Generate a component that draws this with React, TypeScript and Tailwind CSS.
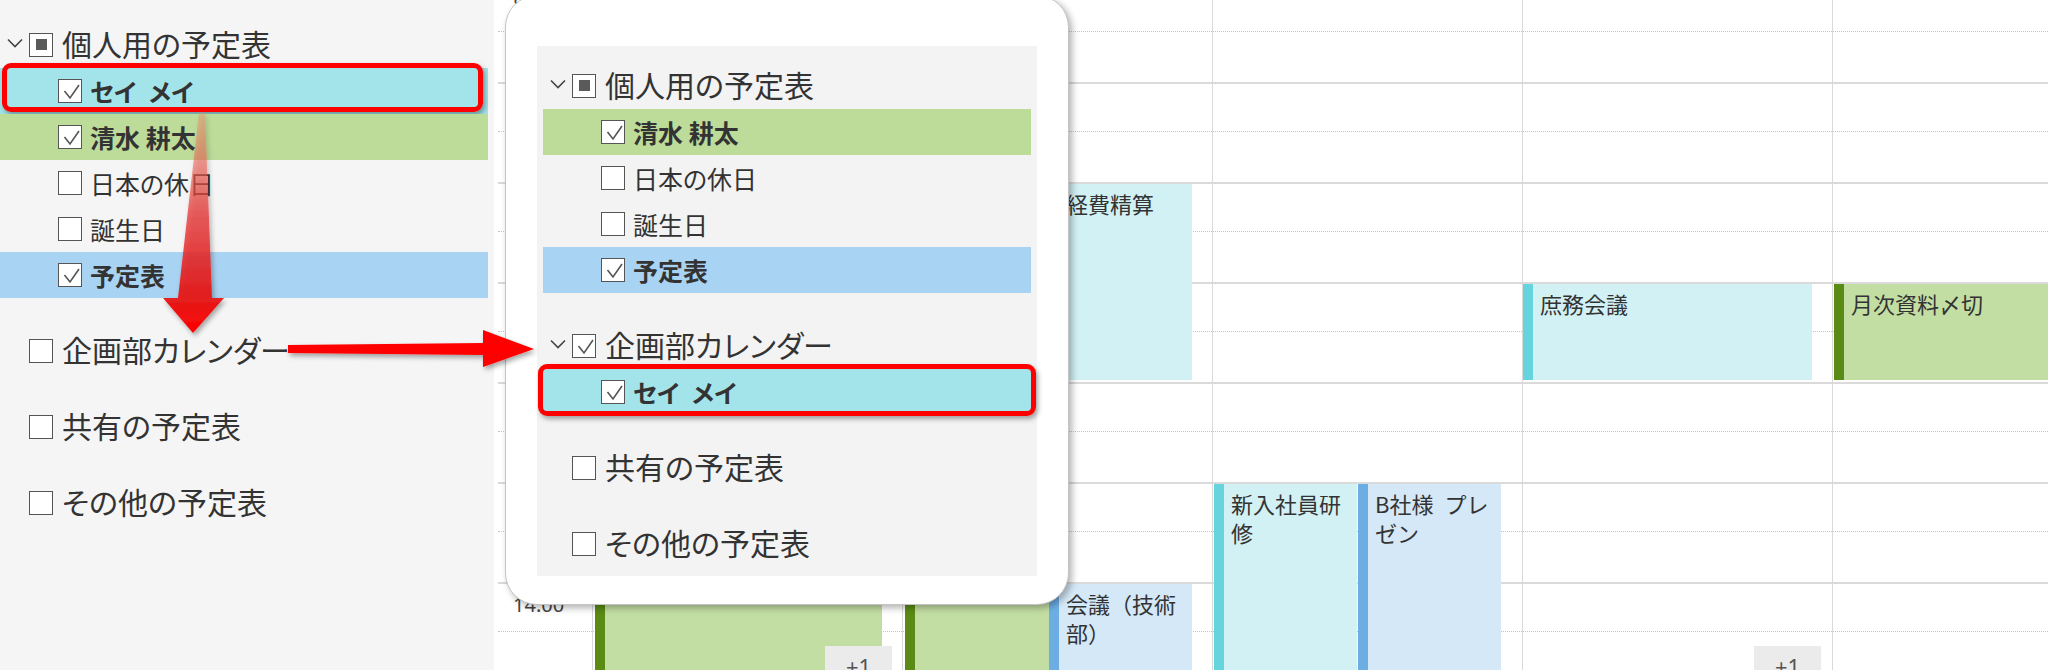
import React from 'react';

type State = 'off' | 'on' | 'mixed';
type Row = { label: string; checked?: boolean; bold?: boolean; bg?: string; mark?: boolean };
type Group = { label: string; state: State; open?: boolean; rows?: Row[] };

type CalEvent = {
  title: string;
  start: number;
  end: number;
  left: number;
  width: number;
  tone: string;
};

const HOURS = [8, 9, 10, 11, 12, 13, 14];

const sideGroups: Group[] = [
  {
    label: '個人用の予定表',
    state: 'mixed',
    open: true,
    rows: [
      { label: 'セイ\u2002メイ', checked: true, bold: true, bg: 'bg-[#a3e4ea]', mark: true },
      { label: '清水 耕太', checked: true, bold: true, bg: 'bg-[#bddb99]' },
      { label: '日本の休日' },
      { label: '誕生日' },
      { label: '予定表', checked: true, bold: true, bg: 'bg-[#a9d3f2]' },
    ],
  },
  { label: '企画部カレンダー', state: 'off' },
  { label: '共有の予定表', state: 'off' },
  { label: 'その他の予定表', state: 'off' },
];

const cardGroups: Group[] = [
  {
    label: '個人用の予定表',
    state: 'mixed',
    open: true,
    rows: [
      { label: '清水 耕太', checked: true, bold: true, bg: 'bg-[#bddb99]' },
      { label: '日本の休日' },
      { label: '誕生日' },
      { label: '予定表', checked: true, bold: true, bg: 'bg-[#a9d3f2]' },
    ],
  },
  {
    label: '企画部カレンダー',
    state: 'on',
    open: true,
    rows: [{ label: 'セイ\u2002メイ', checked: true, bold: true, bg: 'bg-[#a3e4ea]', mark: true }],
  },
  { label: '共有の予定表', state: 'off' },
  { label: 'その他の予定表', state: 'off' },
];

// tone -> background + left stripe
const tones: Record<string, string> = {
  cyan: 'bg-[#d2f1f4] border-[#66d4dc]',
  blue: 'bg-[#d4e8f7] border-[#6caee4]',
  green: 'bg-[#c3dea3] border-[#5a8b14]',
};

const days: { events: CalEvent[]; more?: number }[] = [
  {
    events: [{ title: '', start: 13, end: 15, left: 2, width: 287, tone: 'green' }],
    more: 232,
  },
  {
    events: [
      { title: '', start: 13, end: 15, left: 2, width: 144, tone: 'green' },
      { title: '経費精算', start: 10, end: 12, left: 146, width: 143, tone: 'cyan' },
      { title: '会議（技術部）', start: 14, end: 15, left: 146, width: 143, tone: 'blue' },
    ],
  },
  {
    events: [
      { title: '新入社員研修', start: 13, end: 15, left: 1, width: 143, tone: 'cyan' },
      { title: 'B社様\u2002プレゼン', start: 13, end: 15, left: 145, width: 143, tone: 'blue' },
    ],
  },
  {
    events: [{ title: '庶務会議', start: 11, end: 12, left: 0, width: 289, tone: 'cyan' }],
    more: 231,
  },
  {
    events: [{ title: '月次資料〆切', start: 11, end: 12, left: 1, width: 289, tone: 'green' }],
  },
];

function Checkbox({ state }: { state: State }) {
  return (
    <span className="relative flex h-[24px] w-[24px] shrink-0 items-center justify-center border-[1.5px] border-[#555] bg-white">
      {state === 'on' && (
        <svg className="absolute inset-0" width="24" height="24" viewBox="0 0 24 24">
          <polyline points="5.5,11 11,18 20,5" fill="none" stroke="#555" strokeWidth="1.6" />
        </svg>
      )}
      {state === 'mixed' && <span className="h-[11px] w-[11px] bg-[#5a5a5a]" />}
    </span>
  );
}

function Chevron() {
  return (
    <svg width="16" height="10" viewBox="0 0 16 10">
      <polyline points="1,1.5 8,8.5 15,1.5" fill="none" stroke="#444" strokeWidth="1.6" />
    </svg>
  );
}

function TreeList({ groups, markClass }: { groups: Group[]; markClass: string }) {
  return (
    <div className="flex w-[488px] flex-col gap-[26px] text-[#333] [font-feature-settings:'palt']">
      {groups.map((g) => (
        <div key={g.label}>
          <div className="flex h-[50px] items-center pl-[7px]">
            <span className="flex w-[16px] items-center">{g.open && <Chevron />}</span>
            <span className="ml-[6px] mt-[3px]">
              <Checkbox state={g.state} />
            </span>
            <span className="ml-[9px] text-[30px] leading-none">{g.label}</span>
          </div>
          {g.rows?.map((r) => (
            <div key={r.label} className={`relative flex h-[46px] items-center pl-[58px] ${r.bg ?? ''}`}>
              <Checkbox state={r.checked ? 'on' : 'off'} />
              <span className={`ml-[8px] text-[25px] leading-none ${r.bold ? 'font-bold' : ''}`}>{r.label}</span>
              {r.mark && (
                <span
                  className={`absolute rounded-[9px] border-[5px] border-[#ff0000] shadow-[2px_3px_5px_rgba(0,0,0,0.35)] ${markClass}`}
                />
              )}
            </div>
          ))}
        </div>
      ))}
    </div>
  );
}

function HourBlock({ label, inset }: { label?: string; inset?: boolean }) {
  return (
    <div className={`relative h-[100px] border-t-2 border-[#dadada] ${inset ? 'ml-[4px]' : ''}`}>
      <div className="h-[48px] border-b border-dotted border-[#c4c4c4]" />
      {label && (
        <span className="absolute left-[15px] top-[9px] font-['Noto_Sans',sans-serif] text-[20px] leading-[24px] text-[#444]">
          {label}
        </span>
      )}
    </div>
  );
}

function DayColumn({ events, more }: { events: CalEvent[]; more?: number }) {
  return (
    <div className="relative w-[310px] shrink-0 border-l border-[#d9d9d9]">
      {HOURS.map((h) => (
        <HourBlock key={h} />
      ))}
      {events.map((e, i) => (
        <div
          key={i}
          className={`absolute overflow-hidden border-l-[10px] pl-[7px] pt-[5px] text-[22px] leading-[29px] text-[#333] ${tones[e.tone]}`}
          style={{ top: (e.start - 8) * 100 + 2, height: (e.end - e.start) * 100 - 4, left: e.left, width: e.width }}
        >
          {e.title}
        </div>
      ))}
      {more !== undefined && (
        <div
          className="absolute top-[664px] flex h-[40px] w-[67px] justify-center bg-[#ebebeb] pt-[6px] font-['Noto_Sans',sans-serif] text-[22px] leading-[29px] text-[#555]"
          style={{ left: more }}
        >
          +1
        </div>
      )}
    </div>
  );
}

function Arrows() {
  return (
    <svg className="pointer-events-none absolute inset-0 z-30" width="2048" height="670" viewBox="0 0 2048 670">
      <defs>
        <linearGradient id="vfade" x1="0" y1="113" x2="0" y2="333" gradientUnits="userSpaceOnUse">
          <stop offset="0" stopColor="#f08a6a" stopOpacity="0.4" />
          <stop offset="0.45" stopColor="#e83a3a" stopOpacity="0.75" />
          <stop offset="0.85" stopColor="#e61414" stopOpacity="0.95" />
          <stop offset="1" stopColor="#f00" />
        </linearGradient>
        <filter id="shadow" x="-20%" y="-20%" width="140%" height="140%">
          <feDropShadow dx="2" dy="3" stdDeviation="2.5" floodColor="#000" floodOpacity="0.35" />
        </filter>
      </defs>
      <g filter="url(#shadow)">
        <polygon points="199,113 205,113 212,298 224,298 193,333 163,298 178,298" fill="url(#vfade)" />
        <polygon points="288,345 483,343 483,330 534,349 483,367 483,355 288,353" fill="#ff0000" />
      </g>
    </svg>
  );
}

export default function App() {
  return (
    <div className="relative flex h-[670px] w-[2048px] overflow-hidden bg-white font-['Noto_Sans_CJK_JP','Noto_Sans',sans-serif]">
      {/* left calendar list */}
      <aside className="w-[494px] shrink-0 bg-[#f5f5f5] pt-[18px]">
        <TreeList groups={sideGroups} markClass="-top-[5px] bottom-[2px] left-[2px] right-[5px]" />
      </aside>

      {/* week grid */}
      <main className="relative flex-1 overflow-hidden">
        <div className="mt-[-18px] flex">
          <div className="w-[98px] shrink-0">
            {HOURS.map((h) => (
              <HourBlock key={h} inset label={`${h}:00`} />
            ))}
          </div>
          {days.map((d, i) => (
            <DayColumn key={i} events={d.events} more={d.more} />
          ))}
        </div>
      </main>

      {/* zoomed popup */}
      <div className="absolute left-[505px] top-[-5px] z-20 h-[610px] w-[564px] rounded-[32px] border border-[#c4c4c4] bg-white pl-[31px] pt-[50px] shadow-[3px_3px_7px_rgba(0,0,0,0.3)]">
        <div className="h-[530px] w-[500px] bg-[#f3f3f3] px-[6px] pt-[13px]">
          <TreeList groups={cardGroups} markClass="-top-[5px] -bottom-[1px] -left-[5px] -right-[5px]" />
        </div>
      </div>

      <Arrows />
    </div>
  );
}
